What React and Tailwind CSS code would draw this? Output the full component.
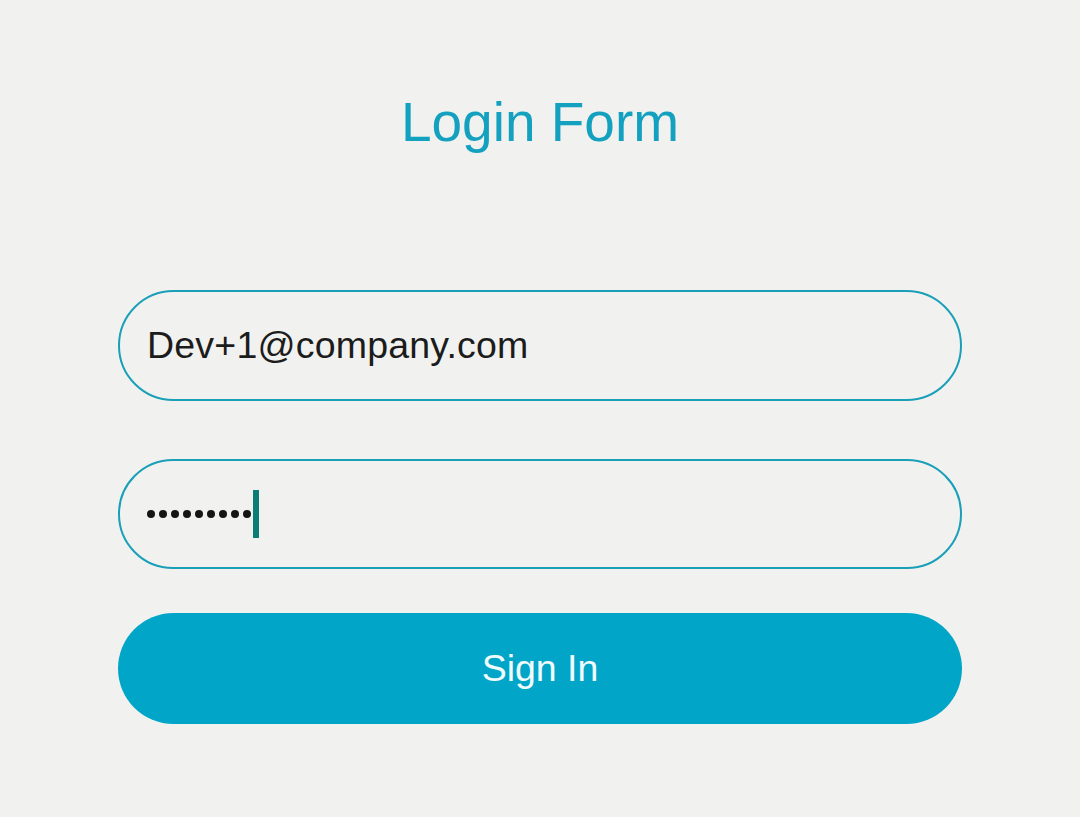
export default function App() {
  const dots = Array.from({ length: 9 });
  return (
    <div className="min-h-[817px] w-[1080px] bg-[#f1f2f0] flex flex-col items-center" style={{ fontFamily: '"Liberation Sans", Arial, sans-serif' }}>
      <h1 className="mt-[95px] h-[54px] leading-[54px] text-[55px] text-[#14a1bf] font-normal">Login Form</h1>
      <div className="mt-[141px] w-[844px] h-[111px] rounded-full border-2 border-[#1a9fb8] flex items-center pl-[27px]">
        <span className="text-[37.5px] text-[#1c1c1c] tracking-[0.2px]">Dev+1@company.com</span>
      </div>
      <div className="mt-[58px] w-[844px] h-[110px] rounded-full border-2 border-[#1a9fb8] flex items-center pl-[27px]">
        <div className="flex items-center gap-[4px]">
          {dots.map((_, i) => (
            <span key={i} className="block w-[8px] h-[8px] rounded-full bg-[#151515]" />
          ))}
        </div>
        <span className="block ml-[2px] w-[6px] h-[48px] bg-[#0a7d74]" />
      </div>
      <button className="mt-[44px] w-[844px] h-[111px] rounded-full bg-[#00a5c8] text-[37.5px] text-[#f0fbfd] flex items-center justify-center">
        Sign In
      </button>
    </div>
  );
}
